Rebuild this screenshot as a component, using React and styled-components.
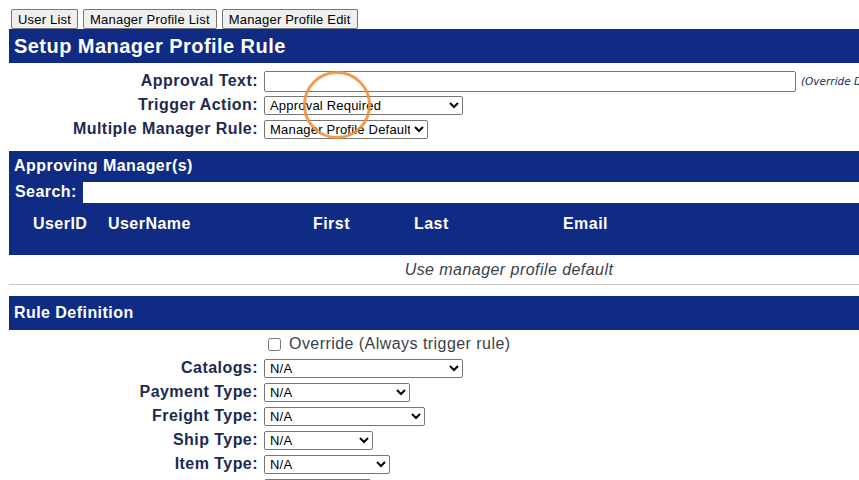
import React from "react";
import styled, { createGlobalStyle } from "styled-components";

const GlobalStyle = createGlobalStyle`
  html, body {
    margin: 0;
    background: #ffffff;
    overflow: hidden;
    font-family: "Liberation Sans", Arial, sans-serif;
  }
`;

const NAVY = "#102b84";
const LABEL = "#1d2a4f";

const Page = styled.div`
  position: relative;
  width: 1000px;
  padding: 9px 0 0 9px;
  letter-spacing: 0.45px;
`;

const Tabs = styled.div`
  display: flex;
  gap: 5px;
  padding-left: 2px;
`;

const TabButton = styled.button`
  height: 20px;
  padding: 0 6px;
  font-family: "Liberation Sans", Arial, sans-serif;
  font-size: 13px;
  letter-spacing: 0.2px;
  color: #000;
  background: #efefef;
  border: 1px solid #767676;
  border-radius: 2px;
`;

const Bar = styled.div`
  background: ${(p) => (p.$clear ? "transparent" : NAVY)};
  color: #fff;
  font-weight: bold;
  font-size: ${(p) => (p.$big ? "20px" : "16px")};
  height: ${(p) => p.$h || 34}px;
  line-height: ${(p) => p.$h || 34}px;
  padding-left: 5px;
`;

const Form = styled.div`
  display: grid;
  grid-template-columns: 249px auto;
  column-gap: 6px;
  grid-auto-rows: 24px;
  align-items: center;
  padding: ${(p) => p.$pad || "0"};
`;

const Label = styled.label`
  text-align: right;
  font-size: 16px;
  font-weight: bold;
  color: ${LABEL};
`;

const Field = styled.div`
  display: flex;
  align-items: center;
`;

const TextInput = styled.input`
  box-sizing: border-box;
  width: ${(p) => p.$w}px;
  height: 21px;
  border: 1px solid #767676;
  border-radius: 2px;
  padding: 0 3px;
`;

const Hint = styled.span`
  margin-left: 5px;
  font-family: "DejaVu Sans", Verdana, sans-serif;
  font-size: 10.5px;
  font-style: italic;
  letter-spacing: 0;
  color: #1d2a4f;
  white-space: nowrap;
`;

const Select = styled.select`
  box-sizing: border-box;
  width: ${(p) => p.$w}px;
  height: 19px;
  font-family: "Liberation Sans", Arial, sans-serif;
  font-size: 13px;
  letter-spacing: 0.2px;
  color: #000;
  background: #fff;
  border: 1px solid #767676;
  border-radius: 2px;
  padding: 0 1px;
`;

const Managers = styled.div`
  margin-top: 10px;
  background: ${NAVY};
  color: #fff;
  font-weight: bold;
  font-size: 16px;
`;

const SearchRow = styled.div`
  display: flex;
  align-items: center;
  height: 22px;
  padding-left: 6px;
  gap: 6px;
`;

const SearchInput = styled.input`
  flex: 1;
  height: 21px;
  border: none;
  background: #fff;
  padding: 0;
`;

const HeadRow = styled.div`
  display: grid;
  grid-template-columns: 75px 205px 101px 149px 1fr;
  padding: 12px 0 0 24px;
  height: 40px;
`;

const Note = styled.div`
  text-align: center;
  font-style: italic;
  font-size: 16px;
  color: #3a3f4a;
  height: 29px;
  line-height: 29px;
`;

const Rule = styled.hr`
  margin: 0 0 11px;
  border: none;
  border-top: 1px solid #c8c8c8;
`;

const Check = styled.label`
  display: flex;
  align-items: center;
  gap: 8px;
  font-size: 16px;
  color: #3a3f4a;
  padding-left: 4px;

  input {
    margin: 0;
    width: 13px;
    height: 13px;
  }
`;

const ClickRing = styled.div`
  position: absolute;
  left: 303px;
  top: 71px;
  width: 62px;
  height: 62px;
  border: 3px solid rgba(240, 145, 60, 0.9);
  border-radius: 50%;
  pointer-events: none;
`;

const ruleSelects = [
  ["Catalogs:", 199],
  ["Payment Type:", 146],
  ["Freight Type:", 161],
  ["Ship Type:", 109],
  ["Item Type:", 126],
  ["Location:", 107],
];

export default function App() {
  return (
    <>
      <GlobalStyle />
      <Page>
        <Tabs>
          <TabButton>User List</TabButton>
          <TabButton>Manager Profile List</TabButton>
          <TabButton>Manager Profile Edit</TabButton>
        </Tabs>
        <Bar $big>Setup Manager Profile Rule</Bar>

        <Form $pad="6px 0 0">
          <Label>Approval Text:</Label>
          <Field>
            <TextInput $w={532} />
            <Hint>(Override Default Approval Text)</Hint>
          </Field>
          <Label>Trigger Action:</Label>
          <Field>
            <Select $w={199} defaultValue="req">
              <option value="req">Approval Required</option>
            </Select>
          </Field>
          <Label>Multiple Manager Rule:</Label>
          <Field>
            <Select $w={164} defaultValue="def">
              <option value="def">Manager Profile Default</option>
            </Select>
          </Field>
        </Form>

        <Managers>
          <Bar $h={30} $clear>
            Approving Manager(s)
          </Bar>
          <SearchRow>
            Search:
            <SearchInput />
          </SearchRow>
          <HeadRow>
            <span>UserID</span>
            <span>UserName</span>
            <span>First</span>
            <span>Last</span>
            <span>Email</span>
          </HeadRow>
        </Managers>
        <Note>Use manager profile default</Note>
        <Rule />

        <Bar>Rule Definition</Bar>
        <Form $pad="2px 0 0">
          <span />
          <Check>
            <input type="checkbox" />
            Override (Always trigger rule)
          </Check>
          {ruleSelects.map(([label, w]) => (
            <React.Fragment key={label}>
              <Label>{label}</Label>
              <Field>
                <Select $w={w} defaultValue="na">
                  <option value="na">N/A</option>
                </Select>
              </Field>
            </React.Fragment>
          ))}
        </Form>

        <ClickRing />
      </Page>
    </>
  );
}
